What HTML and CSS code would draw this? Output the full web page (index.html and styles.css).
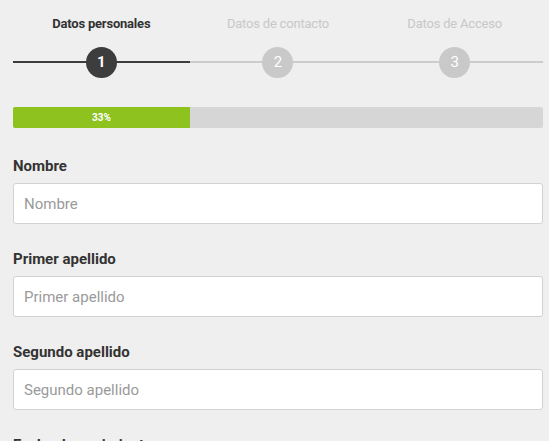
FILE: index.html
```html
<html>
    <head>
        <meta charset='utf-8'/>
        <title>Registro</title>
        <link rel="stylesheet" href="styles.css">
    </head>
    <body>
        <div class="main">
            <div class="steps">
                <div class="step active">
                    <div class="step_name">Datos personales</div>
                    <div class="step_track"><span class="step_num">1</span></div>
                </div>
                <div class="step">
                    <div class="step_name">Datos de contacto</div>
                    <div class="step_track"><span class="step_num">2</span></div>
                </div>
                <div class="step">
                    <div class="step_name">Datos de Acceso</div>
                    <div class="step_track"><span class="step_num">3</span></div>
                </div>
            </div>

            <div class="progress">
                <div class="progress_bar" style="width: 33.4%;">33%</div>
            </div>

            <div class="field">
                <label for="nombre">Nombre</label>
                <input type="text" id="nombre" placeholder="Nombre"/>
            </div>
            <div class="field">
                <label for="ape1">Primer apellido</label>
                <input type="text" id="ape1" placeholder="Primer apellido"/>
            </div>
            <div class="field">
                <label for="ape2">Segundo apellido</label>
                <input type="text" id="ape2" placeholder="Segundo apellido"/>
            </div>
            <div class="field">
                <label for="fecha">Fecha de nacimiento</label>
                <input type="text" id="fecha" placeholder="dd/mm/aaaa"/>
            </div>
        </div>
    </body>
</html>
```

FILE: styles.css
```css
body { margin: 0; background-color: #efefef; font-family: Roboto, "Liberation Sans", sans-serif; color: #333333; overflow: hidden;}
.main { width: 530px; margin-left: 13px; }

.steps { display: grid; grid-template-columns: 1fr 1fr 1fr; padding-top: 16px; }
.step { text-align: center; }
.step_name { font-size: 13px; line-height: 16px; color: #c8c8c8; letter-spacing: -0.2px; }
.step.active .step_name { color: #333333; font-weight: bold; }
.step_track { position: relative; height: 32px; margin-top: 14px; display: flex; justify-content: center; align-items: center; }
.step_track::before { content: ""; position: absolute; left: 0; right: 0; top: 15px; height: 2px; background-color: #cccccc; }
.step.active .step_track::before { background-color: #3d3d3d; }
.step_num { position: relative; width: 31px; height: 31px; border-radius: 50%; background-color: #c9c9c9; color: #ffffff; font-size: 15px; line-height: 31px; }
.step.active .step_num { background-color: #3d3d3d; font-weight: bold; }

.progress { margin-top: 29px; height: 21px; background-color: #d6d6d6; border-radius: 2px; overflow: hidden; }
.progress_bar { height: 21px; background-color: #8dc21f; color: #ffffff; font-size: 10px; font-weight: bold; line-height: 21px; text-align: center; }

.field { margin-top: 28px; }
.field + .field { margin-top: 25px; }
.field label { display: block; font-size: 15px; font-weight: bold; line-height: 20px; color: #333333; }
.field input { display: block; box-sizing: border-box; width: 100%; height: 41px; margin-top: 7px; padding: 0 10px; border: 1px solid #d2d2d2; border-radius: 3px; background-color: #ffffff; font-family: Roboto, "Liberation Sans", sans-serif; font-size: 15px; color: #333333; }
.field input::placeholder { color: #9a9a9a; }
```
